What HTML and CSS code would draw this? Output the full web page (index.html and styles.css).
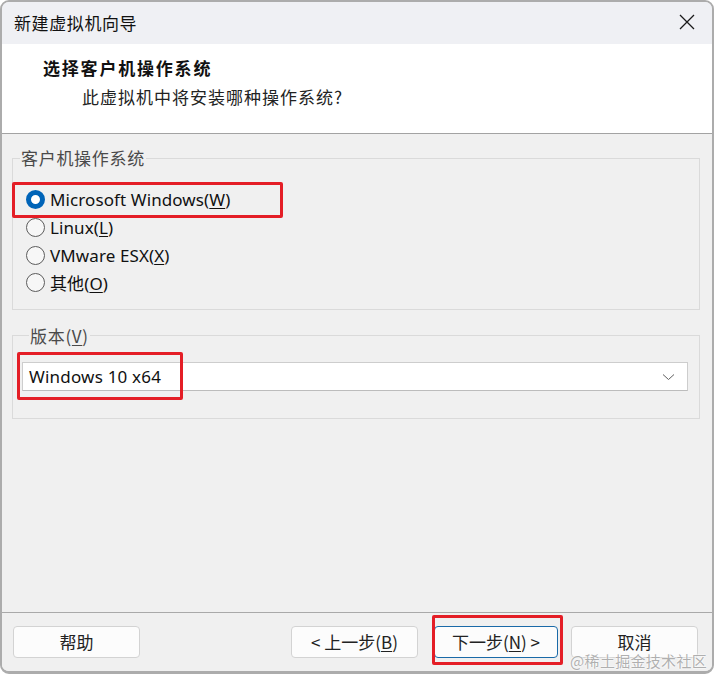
FILE: index.html
```html
<!DOCTYPE html>
<html lang="zh-CN">
<head>
<meta charset="utf-8">
<title>新建虚拟机向导</title>
<link rel="stylesheet" href="styles.css">
</head>
<body>
<div class="window">
  <div class="titlebar">
    <span class="title">新建虚拟机向导</span>
    <span class="close" aria-label="关闭">
      <svg width="16" height="16" viewBox="0 0 16 16"><path d="M1 1 L15 15 M15 1 L1 15" stroke="#1a1a1a" stroke-width="1.3" fill="none"/></svg>
    </span>
  </div>
  <div class="header">
    <div class="h-title">选择客户机操作系统</div>
    <div class="h-sub">此虚拟机中将安装哪种操作系统?</div>
  </div>
  <div class="body">
    <div class="content">
      <fieldset class="group group-os">
        <legend>客户机操作系统</legend>
        <div class="radio-row">
          <span class="radio checked"></span><span class="label">Microsoft Windows(<u>W</u>)</span>
          <span class="mark mark-os"></span>
        </div>
        <div class="radio-row">
          <span class="radio"></span><span class="label">Linux(<u>L</u>)</span>
        </div>
        <div class="radio-row">
          <span class="radio"></span><span class="label">VMware ESX(<u>X</u>)</span>
        </div>
        <div class="radio-row">
          <span class="radio"></span><span class="label">其他(<u>O</u>)</span>
        </div>
      </fieldset>
      <fieldset class="group group-ver">
        <legend>版本(<u>V</u>)</legend>
        <div class="select">
          <span class="select-text">Windows 10 x64</span>
          <svg class="chev" width="13" height="8" viewBox="0 0 13 8"><path d="M1 1.5 L6.5 6.5 L12 1.5" stroke="#606060" stroke-width="1" fill="none"/></svg>
          <span class="mark mark-ver"></span>
        </div>
      </fieldset>
    </div>
    <div class="footer">
      <button class="btn">帮助</button>
      <div class="spacer"></div>
      <button class="btn back">&lt; 上一步(<u>B</u>)</button>
      <button class="btn primary">下一步(<u>N</u>) &gt;<span class="mark mark-next"></span></button>
      <button class="btn">取消</button>
      <span class="watermark">@稀土掘金技术社区</span>
    </div>
  </div>
</div>
</body>
</html>
```
FILE: styles.css
```css
* { box-sizing: border-box; }
html, body { margin: 0; padding: 0; background: #ffffff; }
body {
  width: 714px;
  height: 674px;
  font-family: "Noto Sans", "Noto Sans CJK SC", sans-serif;
  color: #1a1a1a;
}
.window {
  width: 714px;
  height: 674px;
  border: 2px solid #acacac;
  border-bottom-width: 3px;
  border-radius: 9px;
  overflow: hidden;
  display: flex;
  flex-direction: column;
  background: #f0f0f0;
}
.titlebar {
  height: 42px;
  background: #eff0f4;
  display: flex;
  align-items: center;
  justify-content: space-between;
  padding: 0 17px 0 12px;
}
.title {
  font-family: "Noto Sans CJK SC", sans-serif;
  font-size: 17px;
  letter-spacing: 0.6px;
  color: #111;
  margin-top: -2px;
}
.close { display: flex; margin-top: -2px; }
.header {
  height: 90px;
  background: #ffffff;
  border-bottom: 1px solid #a3a3a3;
  padding: 12px 0 0 41px;
}
.h-title {
  font-family: "Noto Sans CJK SC", sans-serif;
  font-weight: 700;
  font-size: 17px;
  letter-spacing: 1.8px;
  line-height: 24px;
  color: #111;
}
.h-sub {
  font-family: "Noto Sans CJK SC", sans-serif;
  font-size: 17px;
  letter-spacing: 1px;
  line-height: 24px;
  margin-top: 5px;
  padding-left: 39px;
  color: #222;
}
.body {
  flex: 1;
  display: flex;
  flex-direction: column;
  background: #f0f0f0;
}
.content { flex: 1; padding: 14px 12px 0 10px; }
.group {
  margin: 0;
  border: 1px solid #dadada;
  padding: 0;
  min-width: 0;
}
.group legend {
  font-family: "Noto Sans CJK SC", sans-serif;
  font-size: 17px;
  line-height: 20px;
  letter-spacing: 0.7px;
  color: #4a4a4a;
  padding: 0 1px;
  margin-left: 7px;
}
.group-os { padding: 18px 0 12px 0; }
.radio-row {
  position: relative;
  height: 27.7px;
  display: flex;
  align-items: center;
  padding-left: 13px;
}
.radio {
  width: 19px;
  height: 19px;
  border-radius: 50%;
  border: 1px solid #5c5c5c;
  background: #f7f7f7;
  flex: none;
}
.radio.checked {
  border: 5.5px solid #0064b8;
  background: #ffffff;
}
.label {
  margin-left: 5px;
  font-size: 17px;
  color: #111;
  letter-spacing: 0.1px;
}
u { text-decoration-thickness: 1px; text-underline-offset: 2px; }
.mark {
  position: absolute;
  border: 3px solid #e41e26;
  border-radius: 2px;
  pointer-events: none;
}
.mark-os { left: -1px; top: -4px; width: 271px; height: 36px; }
.group-ver { margin-top: 16px; padding: 16px 11px 27px 9px; }
.select {
  position: relative;
  height: 29px;
  background: #ffffff;
  border: 1px solid #cdcdcd;
  border-bottom-color: #bcbcbc;
  display: flex;
  align-items: center;
  justify-content: space-between;
  padding: 0 12px 0 6px;
}
.select-text { font-size: 17px; color: #111; letter-spacing: 0.2px; }
.chev { margin-top: 1px; }
.mark-ver { left: -6px; top: -11px; width: 166px; height: 48px; }
.footer {
  position: relative;
  height: 59px;
  border-top: 1px solid #a9a9a9;
  display: flex;
  align-items: flex-start;
  padding: 13px 14px 0 11px;
  gap: 13px;
}
.spacer { flex: 1; }
.btn {
  position: relative;
  width: 127px;
  height: 32px;
  border: 1px solid #d3d3d3;
  border-radius: 4px;
  background: #fcfcfc;
  font-family: "Noto Sans CJK SC", sans-serif;
  font-size: 17px;
  color: #222;
  padding: 0;
  line-height: 28px;
  flex: none;
}
.btn u { text-underline-offset: 2px; }
.btn.back { width: 127px; margin-right: 3px; }
.btn.primary { border-color: #1a6aa8; width: 124px; }
.mark-next { left: -3px; top: -12px; width: 131px; height: 50px; }
.watermark {
  position: absolute;
  right: 5px;
  bottom: 0px;
  font-family: "Noto Sans CJK SC", sans-serif;
  font-size: 15px;
  color: rgba(150,150,150,0.75);
  text-shadow: 0 0 2px #ffffff, 0 0 2px #ffffff;
  letter-spacing: 0.3px;
}
```
